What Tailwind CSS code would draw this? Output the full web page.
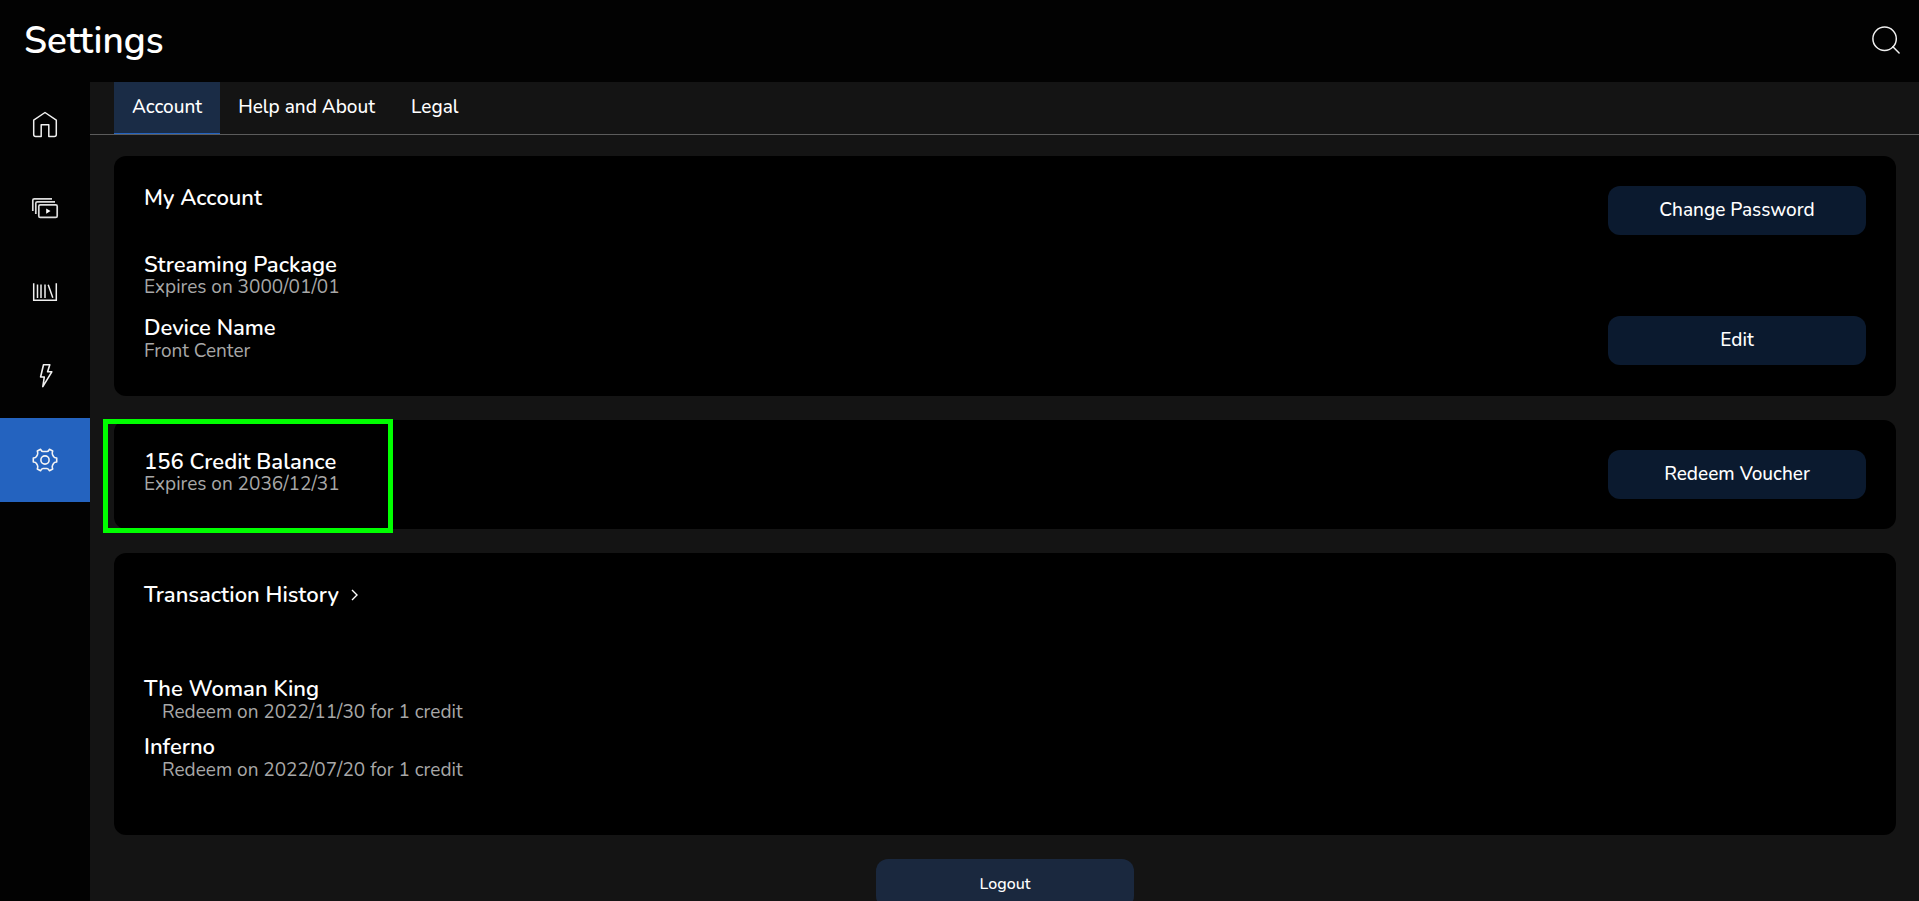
<!DOCTYPE html>
<html lang="en">
<head>
  <meta charset="UTF-8">
  <meta name="viewport" content="width=device-width, initial-scale=1.0">
  <title>Settings</title>
  <script src="https://cdn.jsdelivr.net/npm/@tailwindcss/browser@4"></script>
</head>
<body class="h-screen overflow-hidden flex flex-col bg-[#141414] text-white font-[Nunito,Lato,sans-serif]">
  <!-- Header -->
  <header class="shrink-0 flex items-center justify-between h-[82px] bg-[#020202] pl-6 pr-[18px]">
    <h1 class="text-[37px] leading-[48px] font-semibold">Settings</h1>
    <button aria-label="Search">
      <svg class="size-[30px]" viewBox="0 0 30 30" fill="none" stroke="#f0f0f0" stroke-width="1.5" stroke-linecap="round">
        <circle cx="13.6" cy="12.7" r="11.7"/>
        <path d="M21.900 20.800l6.200 6.200"/>
      </svg>
    </button>
  </header>

  <div class="flex flex-1 min-h-0">
    <!-- Side navbar -->
    <nav class="w-[90px] shrink-0 bg-[#020202]">
      <a href="#home" aria-label="Home" class="flex items-center justify-center h-[84px]">
        <svg class="size-7" viewBox="0 0 28 28" fill="none" stroke="#f0f0f0" stroke-width="1.5" stroke-linejoin="round">
          <path d="M14 2.500L2.700 10.200v14.200c0 1.200.8 2 2 2h5.500V14.800h7.600v11.600h5.500c1.200 0 2-.8 2-2V10.200z"/>
        </svg>
      </a>
      <a href="#channels" aria-label="Video library" class="flex items-center justify-center h-[84px]">
        <svg class="size-7" viewBox="0 0 28 28" fill="none" stroke="#dcdcdc" stroke-width="1.7">
          <rect x="7.800" y="10.800" width="18.400" height="12.600" rx="1.500"/>
          <path d="M4.800 20V9.300c0-1 .6-1.500 1.500-1.500H24"/>
          <path d="M1.800 17V6.300c0-1 .6-1.500 1.500-1.500H21"/>
          <path d="M15.200 14.500v5.200l4.300-2.600z" fill="#fff" stroke="none"/>
        </svg>
      </a>
      <a href="#library" aria-label="Library" class="flex items-center justify-center h-[84px]">
        <svg class="size-7" viewBox="0 0 28 28" fill="none" stroke="#f0f0f0" stroke-width="1.5">
          <path d="M2.700 5.200v17h22.600v-17"/>
          <path d="M6.500 6.500v13.500M10 6.500v13.500M14 6.500v13.500M17.200 6.700l4.600 13"/>
        </svg>
      </a>
      <a href="#live" aria-label="Live" class="flex items-center justify-center h-[84px]">
        <svg class="size-7" viewBox="0 0 28 28" fill="none" stroke="#f0f0f0" stroke-width="1.6" stroke-linejoin="round">
          <path d="M12.500 2.800h6.300l-2.200 7h4.200L11.800 24.600l1.500-9.600H9.600z"/>
        </svg>
      </a>
      <a href="#settings" aria-label="Settings" aria-current="page" class="flex items-center justify-center h-[84px] bg-[#2463bf]">
        <svg class="size-7" viewBox="0 0 28 28" fill="none" stroke="#f4f4f4" stroke-width="1.6" stroke-linejoin="round">
          <path d="M9.600 3.300Q10.600 5.500 12 5.500H16Q17.400 5.500 18.400 3.300L21.700 5Q20.800 7.500 21.500 8.700L22.600 10.600Q23.300 11.800 25.700 12V16Q23.300 16.200 22.600 17.400L21.500 19.300Q20.800 20.500 21.700 23L18.400 24.700Q17.400 22.500 16 22.500H12Q10.600 22.500 9.600 24.700L6.300 23Q7.200 20.500 6.500 19.300L5.400 17.400Q4.700 16.200 2.300 16V12Q4.700 11.800 5.400 10.600L6.500 8.700Q7.200 7.500 6.300 5z"/>
          <circle cx="14" cy="14" r="4.100"/>
        </svg>
      </a>
    </nav>

    <!-- Main content -->
    <main class="flex-1 min-w-0">
      <!-- Tabs -->
      <div class="flex h-[53px] pl-6 border-b border-[#5c5c5c] text-[19px] font-medium">
        <button class="px-[18px] bg-[#1a2c46] border-b border-[#2463bf]">Account</button>
        <button class="px-[18px] border-b border-transparent">Help and About</button>
        <button class="px-[18px] border-b border-transparent">Legal</button>
      </div>

      <div class="flex flex-col gap-6 pt-[21px] pl-6 pr-[23px]">
        <!-- My Account -->
        <section class="bg-black rounded-xl px-[30px] pt-[30px] pb-[31px]">
          <div class="flex justify-between">
            <h2 class="text-[22px] leading-6 font-semibold">My Account</h2>
            <button class="w-[258px] h-[49px] rounded-xl bg-[#0b1a2f] text-[19px] font-medium">Change Password</button>
          </div>
          <div class="mt-[18px]">
            <h3 class="text-[22px] leading-6 font-semibold">Streaming Package</h3>
            <p class="text-[19px] leading-5 text-[#a8a8a8]">Expires on 3000/01/01</p>
          </div>
          <div class="mt-[19px] flex justify-between">
            <div>
              <h3 class="text-[22px] leading-6 font-semibold">Device Name</h3>
              <p class="text-[19px] leading-[22px] text-[#a8a8a8]">Front Center</p>
            </div>
            <button class="w-[258px] h-[49px] rounded-xl bg-[#0b1a2f] text-[19px] font-medium">Edit</button>
          </div>
        </section>

        <!-- Credit balance -->
        <section class="relative bg-black rounded-xl p-[30px] flex justify-between">
          <div>
            <h2 class="text-[22px] leading-6 font-semibold">156 Credit Balance</h2>
            <p class="text-[19px] leading-5 text-[#a8a8a8]">Expires on 2036/12/31</p>
          </div>
          <button class="w-[258px] h-[49px] rounded-xl bg-[#0b1a2f] text-[19px] font-medium">Redeem Voucher</button>
          <!-- highlight box -->
          <div class="absolute -left-[11px] -top-px w-[290px] h-[114px] border-5 border-[#00ff00] pointer-events-none"></div>
        </section>

        <!-- Transaction history -->
        <section class="bg-black rounded-xl px-[30px] pt-[30px] pb-[54px]">
          <h2 class="text-[22px] leading-6 font-semibold">
            <a href="#transactions" class="flex w-fit items-center gap-3">
              Transaction History
              <svg class="w-[7px] h-3" viewBox="0 0 7 12" fill="none" stroke="#fff" stroke-width="1.4"><path d="M1 1l5 5-5 5"/></svg>
            </a>
          </h2>
          <ul class="mt-[70px] flex flex-col gap-3">
            <li>
              <h3 class="text-[22px] leading-6 font-semibold">The Woman King</h3>
              <p class="pl-[18px] text-[19px] leading-[22px] text-[#a8a8a8]">Redeem on 2022/11/30 for 1 credit</p>
            </li>
            <li>
              <h3 class="text-[22px] leading-6 font-semibold">Inferno</h3>
              <p class="pl-[18px] text-[19px] leading-[22px] text-[#a8a8a8]">Redeem on 2022/07/20 for 1 credit</p>
            </li>
          </ul>
        </section>

        <button class="self-center w-[258px] h-[49px] rounded-xl bg-[#1a283e] text-base font-medium">Logout</button>
      </div>
    </main>
  </div>
</body>
</html>
